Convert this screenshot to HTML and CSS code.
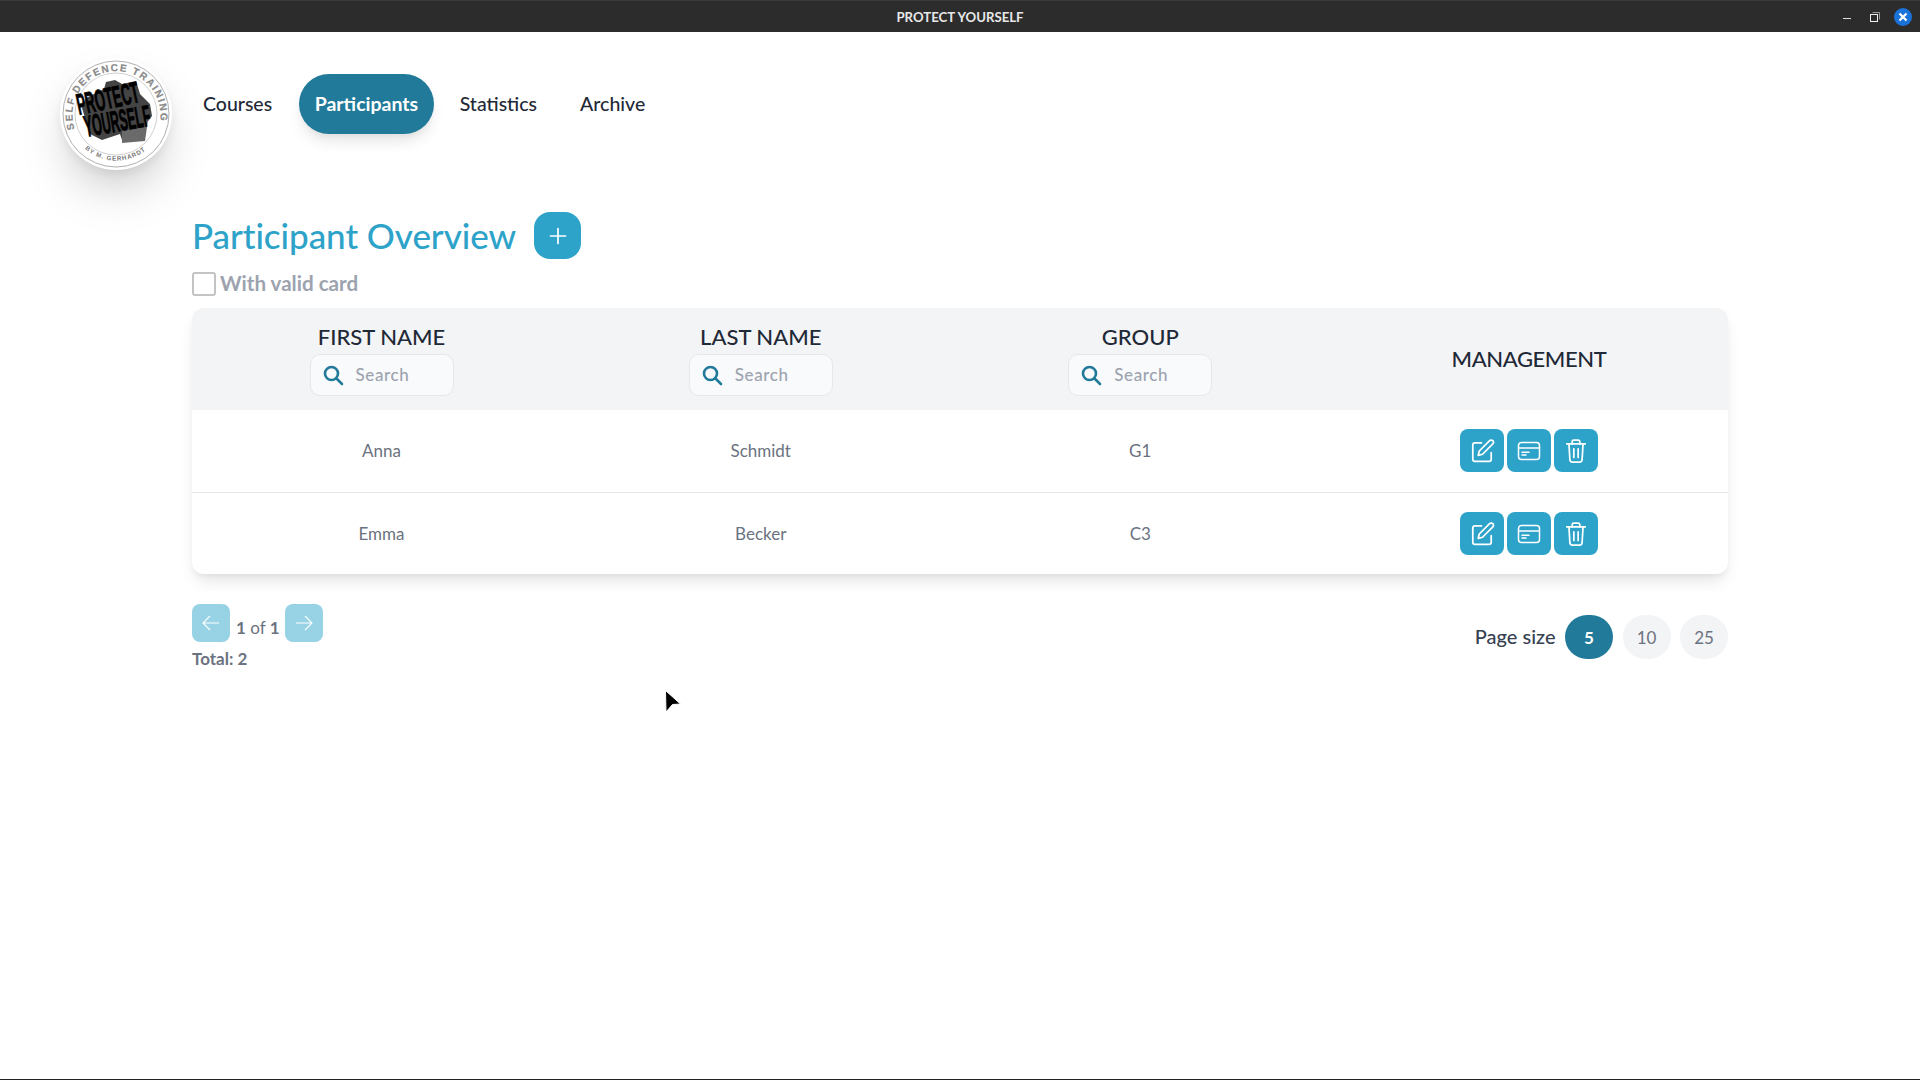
FILE: index.html
```html
<!DOCTYPE html>
<html lang="en">
<head>
<meta charset="utf-8">
<title>PROTECT YOURSELF</title>
<link rel="stylesheet" href="styles.css">
</head>
<body>
<div class="titlebar">
  <span class="titlebar-title">PROTECT YOURSELF</span>
  <div class="winctl">
    <svg class="wc-min" width="10" height="10" viewBox="0 0 10 10"><path d="M1 6.5h8" stroke="#ddd" stroke-width="1"/></svg>
    <svg class="wc-max" width="12" height="12" viewBox="0 0 12 12"><path d="M3.5 1.5h7v7" fill="none" stroke="#999" stroke-width="1"/><rect x="1.5" y="3.5" width="7" height="7" fill="none" stroke="#eee" stroke-width="1"/></svg>
    <span class="wc-close"><svg width="10" height="10" viewBox="0 0 10 10"><path d="M1.5 1.5l7 7M8.5 1.5l-7 7" stroke="#fff" stroke-width="2.2"/></svg></span>
  </div>
</div>
<header class="topnav">
  <div class="logo">
    <svg width="112" height="112" viewBox="0 0 112 112">
      <defs>
        <path id="arcTop" d="M14.7 71A44 44 0 1 1 92 83"/>
        <path id="arcBot" d="M22 88A46.7 46.7 0 0 0 90 88"/>
      </defs>
      <circle cx="56" cy="56" r="53" fill="none" stroke="#b0b0b0" stroke-width="1"/>
      <circle cx="56" cy="56" r="41" fill="none" stroke="#c4c4c4" stroke-width=".8"/>
      <text class="logo-ring"><textPath href="#arcTop">SELF DEFENCE TRAINING</textPath></text>
      <text class="logo-by"><textPath href="#arcBot" startOffset="4">BY M. GERHARDT</textPath></text>
      <path d="M22 50L26 40L44 31L46 24L55 22L62 26L76 23L80 36L90 46L92 58L86 66L85 78L62 82L60 76L42 82L30 76Z" fill="#444"/>
      <path d="M62 73L84 69L86 62L88 62L85 83L62 85Z" fill="#6a6a6a"/>
      <text class="logo-fist" transform="translate(19 57) rotate(-12) scale(.44 1)">PROTECT</text>
      <text class="logo-fist" transform="translate(26 79) rotate(-10) scale(.41 1)">YOURSELF</text>
    </svg>
  </div>
  <nav class="nav">
    <a class="nav-link">Courses</a>
    <a class="nav-link active">Participants</a>
    <a class="nav-link">Statistics</a>
    <a class="nav-link">Archive</a>
  </nav>
</header>
<main class="content">
  <div class="heading">
    <h1>Participant Overview</h1>
    <button class="add-btn"><svg width="24" height="24" viewBox="0 0 24 24"><path d="M12 4.5v15M4.5 12h15" stroke="#fff" stroke-width="1.7" stroke-linecap="round"/></svg></button>
  </div>
  <label class="check"><span class="box"></span><span class="check-text">With valid card</span></label>
  <div class="table">
    <div class="row head">
      <div class="cell"><div class="th">FIRST NAME</div><div class="search"><svg width="22" height="22" viewBox="0 0 22 22"><circle cx="9.5" cy="9.5" r="6.5" fill="none" stroke="#217a99" stroke-width="2.6"/><path d="M14.5 14.5l5.5 5.5" stroke="#217a99" stroke-width="2.6" stroke-linecap="round"/></svg><span class="search-text">Search</span></div></div>
      <div class="cell"><div class="th">LAST NAME</div><div class="search"><svg width="22" height="22" viewBox="0 0 22 22"><circle cx="9.5" cy="9.5" r="6.5" fill="none" stroke="#217a99" stroke-width="2.6"/><path d="M14.5 14.5l5.5 5.5" stroke="#217a99" stroke-width="2.6" stroke-linecap="round"/></svg><span class="search-text">Search</span></div></div>
      <div class="cell"><div class="th">GROUP</div><div class="search"><svg width="22" height="22" viewBox="0 0 22 22"><circle cx="9.5" cy="9.5" r="6.5" fill="none" stroke="#217a99" stroke-width="2.6"/><path d="M14.5 14.5l5.5 5.5" stroke="#217a99" stroke-width="2.6" stroke-linecap="round"/></svg><span class="search-text">Search</span></div></div>
      <div class="cell"><div class="th th-solo">MANAGEMENT</div></div>
    </div>
    <div class="row body">
      <div class="cell">Anna</div><div class="cell">Schmidt</div><div class="cell">G1</div>
      <div class="cell actions">
        <button class="act"><svg width="26" height="26" viewBox="0 0 24 24" fill="none" stroke="#fff" stroke-width="1.6" stroke-linejoin="round" stroke-linecap="round"><path d="M11.5 4.5H5.5a2 2 0 0 0-2 2v13a2 2 0 0 0 2 2h13a2 2 0 0 0 2-2v-6"/><path d="M19 2.5a2.1 2.1 0 0 1 3 3L12.5 15l-4 1 1-4z"/></svg></button>
        <button class="act"><svg width="26" height="26" viewBox="0 0 26 26" fill="none" stroke="#fff" stroke-width="1.5" stroke-linecap="round"><rect x="2.5" y="4.5" width="21" height="17" rx="3"/><path d="M2.5 10h21"/><path d="M6 14.2h7M6 17h4"/></svg></button>
        <button class="act"><svg width="26" height="26" viewBox="0 0 24 24" fill="none" stroke="#fff" stroke-width="1.6" stroke-linecap="round" stroke-linejoin="round"><path d="M3.5 5.5h17"/><path d="M8.5 5.5V3.5a1.5 1.5 0 0 1 1.5-1.5h4a1.5 1.5 0 0 1 1.5 1.5v2"/><path d="M5.5 5.5l.9 15a2 2 0 0 0 2 1.7h7.2a2 2 0 0 0 2-1.7l.9-15"/><path d="M10 10v8M14 10v8"/></svg></button>
      </div>
    </div>
    <div class="row body last">
      <div class="cell">Emma</div><div class="cell">Becker</div><div class="cell">C3</div>
      <div class="cell actions">
        <button class="act"><svg width="26" height="26" viewBox="0 0 24 24" fill="none" stroke="#fff" stroke-width="1.6" stroke-linejoin="round" stroke-linecap="round"><path d="M11.5 4.5H5.5a2 2 0 0 0-2 2v13a2 2 0 0 0 2 2h13a2 2 0 0 0 2-2v-6"/><path d="M19 2.5a2.1 2.1 0 0 1 3 3L12.5 15l-4 1 1-4z"/></svg></button>
        <button class="act"><svg width="26" height="26" viewBox="0 0 26 26" fill="none" stroke="#fff" stroke-width="1.5" stroke-linecap="round"><rect x="2.5" y="4.5" width="21" height="17" rx="3"/><path d="M2.5 10h21"/><path d="M6 14.2h7M6 17h4"/></svg></button>
        <button class="act"><svg width="26" height="26" viewBox="0 0 24 24" fill="none" stroke="#fff" stroke-width="1.6" stroke-linecap="round" stroke-linejoin="round"><path d="M3.5 5.5h17"/><path d="M8.5 5.5V3.5a1.5 1.5 0 0 1 1.5-1.5h4a1.5 1.5 0 0 1 1.5 1.5v2"/><path d="M5.5 5.5l.9 15a2 2 0 0 0 2 1.7h7.2a2 2 0 0 0 2-1.7l.9-15"/><path d="M10 10v8M14 10v8"/></svg></button>
      </div>
    </div>
  </div>
  <div class="footer">
    <div class="pager">
      <div class="pager-row">
        <button class="pg"><svg width="22" height="22" viewBox="0 0 22 22" fill="none" stroke="#fff" stroke-width="1.1"><path d="M19 11H3M10 4l-7 7 7 7"/></svg></button>
        <span class="pg-text"><b>1</b> of <b>1</b></span>
        <button class="pg"><svg width="22" height="22" viewBox="0 0 22 22" fill="none" stroke="#fff" stroke-width="1.1"><path d="M3 11h16M12 4l7 7-7 7"/></svg></button>
      </div>
      <div class="total">Total: 2</div>
    </div>
    <div class="sizes">
      <span class="sizes-label">Page size</span>
      <span class="size on">5</span>
      <span class="size">10</span>
      <span class="size">25</span>
    </div>
  </div>
  <svg class="cursor" width="18" height="26" viewBox="0 0 18 26"><path d="M1.5 1.5L16.5 15L8.5 15.5L2 23z" fill="#000" stroke="#fff" stroke-width="1"/></svg>
</main>
<div class="bottom-line"></div>
</body>
</html>
```
FILE: styles.css
```css
* { box-sizing: border-box; }
html, body { margin: 0; height: 100%; }
body {
  width: 1920px; height: 1080px; overflow: hidden; position: relative;
  background: #fff; font-family: "Lato", "Noto Sans", sans-serif; color: #374151;
  display: flex; flex-direction: column;
}
.titlebar {
  height: 32px; background: #2c2c2c; border-top: 1px solid #3a3a3a; color: #e8e8e8;
  display: flex; align-items: center; justify-content: center;
  font-size: 13.2px; font-weight: 700; position: relative; flex: none;
}
.winctl { position: absolute; right: 8px; top: 0; height: 31px; display: flex; align-items: center; }
.wc-min, .wc-max { display: block; }
.wc-min { margin-right: 17px; }
.wc-max { margin-right: 13px; }
.wc-close { width: 18px; height: 18px; border-radius: 50%; background: #1a73d9; display: flex; align-items: center; justify-content: center; }
.topnav { display: flex; align-items: flex-start; padding: 26px 0 0 60px; height: 180px; flex: none; }
.logo { width: 112px; height: 112px; border-radius: 50%; background: #fff; box-shadow: 0 25px 50px -12px rgba(0,0,0,.25), 0 4px 10px rgba(0,0,0,.06); flex: none; }
.logo svg { display: block; }
.logo-ring { font: 700 10px "Liberation Sans", sans-serif; fill: #8a8a8a; stroke: #8a8a8a; stroke-width: .2; letter-spacing: 1.5px; }
.logo-by { font: 700 6.2px "Liberation Sans", sans-serif; fill: #777; letter-spacing: .9px; }
.logo-fist { font: 700 30px "Liberation Sans", sans-serif; fill: #000; stroke: #000; stroke-width: .8; }
.nav { display: flex; align-items: center; margin-top: 16px; margin-left: 15px; height: 60px; font-size: 19.5px; font-weight: 500; }
.nav-link { padding: 0 16px 2px; height: 60px; display: flex; align-items: center; border-radius: 30px; color: #1f2937; margin-right: 10px; }
.nav-link:first-child { margin-right: 11px; }
.nav-link.active { padding: 0 15.5px 2px; background: #217a99; color: #fff; font-weight: 700; box-shadow: 0 10px 15px -3px rgba(0,0,0,.1), 0 4px 6px -2px rgba(0,0,0,.05); }
.nav-link:nth-child(3) { margin-right: 11px; }
.content { padding: 0 192px; position: relative; flex: 1; }
.heading { display: flex; align-items: center; gap: 18px; height: 47px; }
h1 { margin: 0; padding-bottom: 2px; font-size: 35px; font-weight: 500; color: #2ea3c9; letter-spacing: -.05px; }
.add-btn { width: 47px; height: 47px; border: 0; padding: 0; border-radius: 16px; background: #2ea3c9; display: flex; align-items: center; justify-content: center; }
.check { display: flex; align-items: center; gap: 4px; margin-top: 13px; height: 24px; font-size: 20.6px; font-weight: 700; color: #9ca3af; }
.check-text { padding-bottom: 2px; }
.box { width: 24px; height: 24px; border: 2px solid #c4c4c4; border-radius: 3px; background: #fff; }
.table { margin-top: 12px; width: 1536px; border-radius: 12px; box-shadow: 0 10px 15px -3px rgba(0,0,0,.1), 0 4px 6px -2px rgba(0,0,0,.05); overflow: hidden; }
.row { display: grid; grid-template-columns: 379px 379.5px 379.5px 398px; }
.row.head { background: #f3f4f6; height: 102px; }
.row.body { height: 83px; padding-bottom: 1px; border-bottom: 1px solid #e5e7eb; font-size: 17px; color: #6b7280; }
.row.body.last { border-bottom: 0; padding-bottom: 0; height: 81px; }
.cell { display: flex; flex-direction: column; align-items: center; justify-content: center; }
.cell.actions { flex-direction: row; gap: 3px; }
.th { font-size: 22px; font-weight: 500; color: #1f2937; line-height: 30px; }
.th-solo { letter-spacing: -.4px; }
.search { width: 144px; height: 42px; margin-top: 2px; border: 1px solid #e5e7eb; border-radius: 10px; background: #f9fafb; display: flex; align-items: center; padding-left: 11px; gap: 12px; font-size: 17px; font-weight: 500; color: #9ca3af; }
.search-text { letter-spacing: .6px; padding-bottom: 2px; }
.act { width: 44px; height: 43px; border: 0; padding: 0; border-radius: 8px; background: #2ea3c9; display: flex; align-items: center; justify-content: center; }
.footer { display: flex; justify-content: space-between; margin-top: 30px; }
.pager-row { display: flex; align-items: center; height: 38px; gap: 6px; }
.pg { width: 38px; height: 38px; border: 0; padding: 0; border-radius: 8px; background: #97d2e5; display: flex; align-items: center; justify-content: center; }
.pg-text { font-size: 17px; color: #6b7280; padding-top: 8px; margin-right: -1px; }
.pg-text b { font-weight: 700; }
.total { font-size: 17px; font-weight: 700; color: #6b7280; margin-top: 6px; }
.sizes { display: flex; align-items: center; gap: 9.5px; height: 44px; margin-top: 11px; }
.sizes-label { font-size: 20px; font-weight: 500; color: #374151; padding-bottom: 2px; }
.size { width: 48px; height: 44px; border-radius: 22px; background: #f3f4f6; color: #6b7280; font-size: 17px; display: flex; align-items: center; justify-content: center; }
.size.on { background: #217a99; color: #fff; font-weight: 700; }
.cursor { position: absolute; left: 664px; top: 477px; }
.bottom-line { position: absolute; left: 0; right: 0; bottom: 0; height: 1px; background: #222; }
```
